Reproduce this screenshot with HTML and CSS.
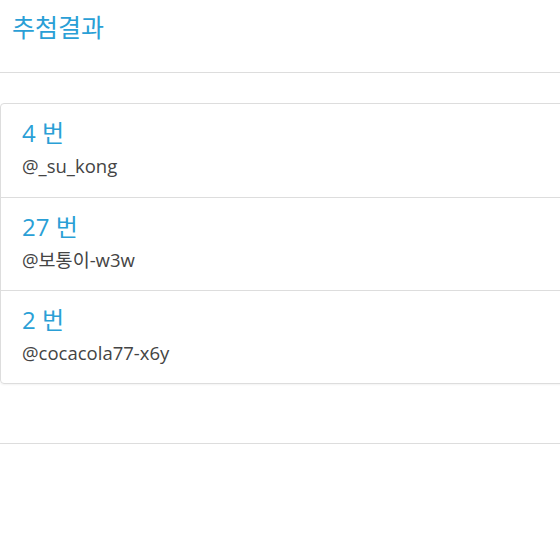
FILE: index.html
```html
<!DOCTYPE html>
<html lang="ko">
<head>
  <meta charset="UTF-8">
  <title>추첨결과</title>
  <link rel="stylesheet" href="styles.css">
</head>
<body>
  <div class="page-header">
    <h3>추첨결과</h3>
  </div>

  <div class="result-panel">
    <ul class="list-group">
      <li class="list-group-item">
        <h4>4 번</h4>
        <p>@_su_kong</p>
      </li>
      <li class="list-group-item">
        <h4>27 번</h4>
        <p>@보통이-w3w</p>
      </li>
      <li class="list-group-item">
        <h4>2 번</h4>
        <p>@cocacola77-x6y</p>
      </li>
    </ul>
  </div>
</body>
</html>
```

FILE: styles.css
```css
body {
  font-family: "Open Sans", "Noto Sans CJK KR", sans-serif;
  background: #ffffff;
  color: #444;
  margin: 0;
}

.page-header {
  padding: 11px 12px 0;
  height: 61px;
  border-bottom: 1px solid #dddddd;
}

.page-header h3 {
  margin: 0;
  font-size: 25px;
  font-weight: 400;
  line-height: 1.3;
  color: #2a9fd6;
}

.result-panel {
  padding: 30px 0 59px;
  border-bottom: 1px solid #dddddd;
}

.list-group {
  list-style: none;
  margin: 0 -10px 0 0;
  padding: 0;
  border: 1px solid #dddddd;
  border-radius: 4px;
  box-shadow: 0 1px 2px rgba(0,0,0,0.05);
}

.list-group-item {
  height: 93px;
  padding: 13px 21px 0;
  box-sizing: border-box;
  border-top: 1px solid #dddddd;
}

.list-group-item:first-child {
  border-top: none;
}

.list-group-item h4 {
  margin: 0;
  font-size: 24px;
  font-weight: 400;
  line-height: 1.3;
  color: #2a9fd6;
}

.list-group-item p {
  margin: 5px 0 0;
  font-size: 18.5px;
  line-height: 1.4;
  color: #444;
}
```
